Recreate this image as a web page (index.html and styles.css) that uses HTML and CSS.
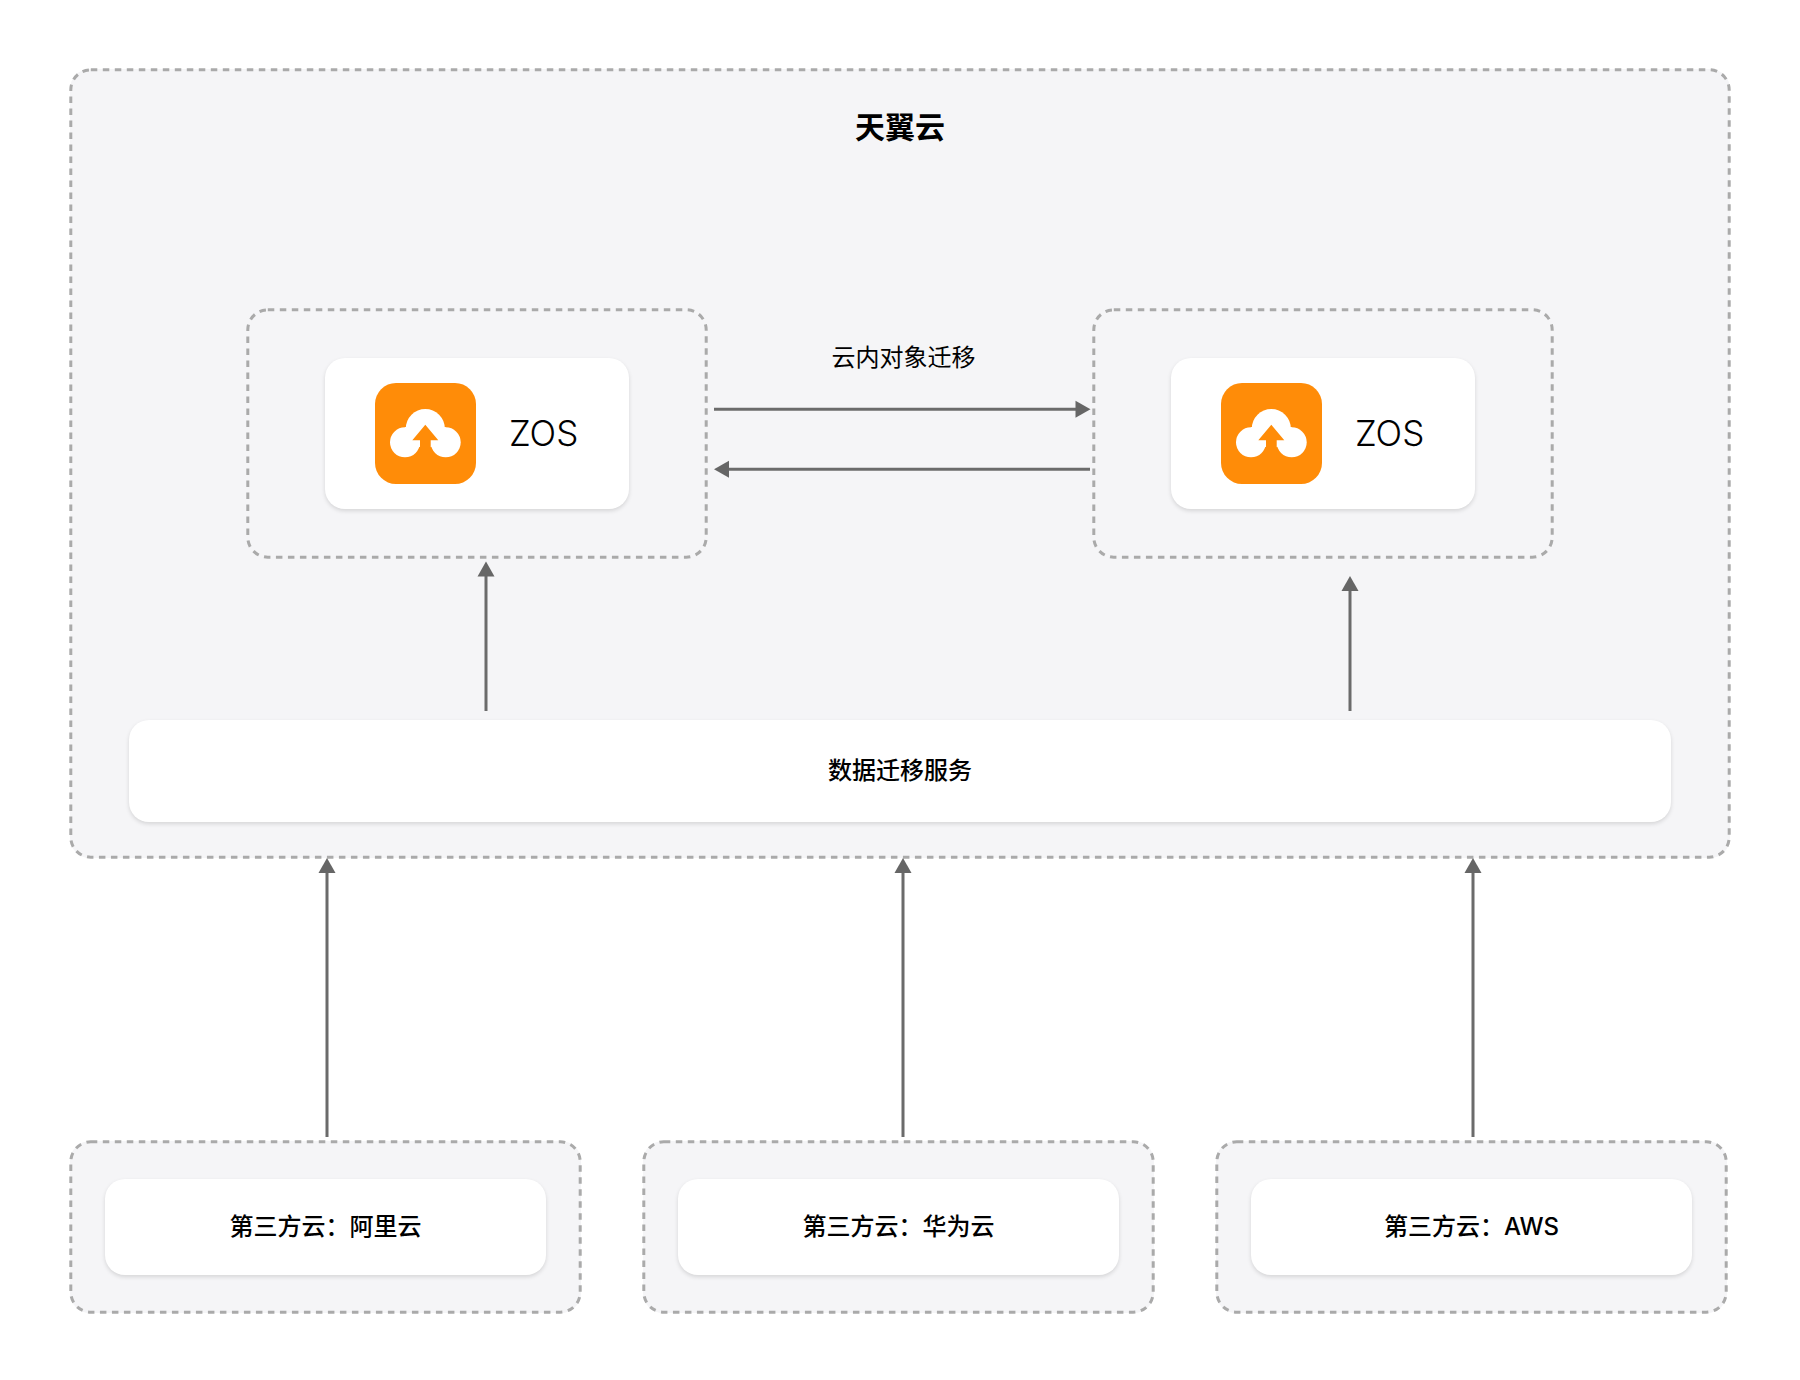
FILE: index.html
```html
<!DOCTYPE html>
<html lang="zh-CN">
<head>
<meta charset="utf-8">
<title>天翼云数据迁移</title>
<link rel="stylesheet" href="styles.css">
</head>
<body>
<main class="page">
  <section class="cloud dashed">
    <svg class="dash" aria-hidden="true"><rect class="dash-r20"/></svg>
    <h1 class="title">天翼云</h1>
    <div class="zones">
      <div class="zone dashed">
        <svg class="dash" aria-hidden="true"><rect class="dash-r20"/></svg>
        <div class="card zos">
          <svg class="zos-icon" viewBox="0 0 101 101" aria-hidden="true">
            <rect class="i-bg" width="101" height="101" rx="21"/>
            <circle class="i-w" cx="30" cy="59.3" r="15"/>
            <circle class="i-w" cx="70.7" cy="59.3" r="15"/>
            <circle class="i-w" cx="50.3" cy="45.500" r="19.5"/>
            <rect class="i-w" x="30" y="44" width="40.7" height="16"/>
            <path class="i-bg" d="M50.3 41.7 63.3 57.3H55.7V76H45V57.3H37.3Z"/>
          </svg>
          <span class="zos-name">ZOS</span>
        </div>
      </div>
      <div class="link"><span class="link-label">云内对象迁移</span></div>
      <div class="zone dashed">
        <svg class="dash" aria-hidden="true"><rect class="dash-r20"/></svg>
        <div class="card zos">
          <svg class="zos-icon" viewBox="0 0 101 101" aria-hidden="true">
            <rect class="i-bg" width="101" height="101" rx="21"/>
            <circle class="i-w" cx="30" cy="59.3" r="15"/>
            <circle class="i-w" cx="70.7" cy="59.3" r="15"/>
            <circle class="i-w" cx="50.3" cy="45.500" r="19.5"/>
            <rect class="i-w" x="30" y="44" width="40.7" height="16"/>
            <path class="i-bg" d="M50.3 41.7 63.3 57.3H55.7V76H45V57.3H37.3Z"/>
          </svg>
          <span class="zos-name">ZOS</span>
        </div>
      </div>
    </div>
    <div class="card service">数据迁移服务</div>
  </section>
  <section class="sources">
    <div class="source dashed">
      <svg class="dash" aria-hidden="true"><rect class="dash-r20"/></svg>
      <div class="card source-card">第三方云：阿里云</div>
    </div>
    <div class="source dashed">
      <svg class="dash" aria-hidden="true"><rect class="dash-r20"/></svg>
      <div class="card source-card">第三方云：华为云</div>
    </div>
    <div class="source dashed">
      <svg class="dash" aria-hidden="true"><rect class="dash-r20"/></svg>
      <div class="card source-card">第三方云：AWS</div>
    </div>
  </section>
  <svg class="arrows" viewBox="0 0 1800 1380" aria-hidden="true">
    <path class="shaft" d="M714 409.3H1077"/>
    <path class="head" d="M1090.5 409.3 1075.5 400.8V417.8Z"/>
    <path class="shaft" d="M1090 469.3H727"/>
    <path class="head" d="M714 469.3 729 460.8V477.8Z"/>
    <path class="shaft" d="M486 711V575"/>
    <path class="head" d="M486 561.5 477.5 576.5H494.5Z"/>
    <path class="shaft" d="M1350 711V589"/>
    <path class="head" d="M1350 576 1341.500 591H1358.500Z"/>
    <path class="shaft" d="M327 1137V871"/>
    <path class="head" d="M327 858 318.500 873H335.500Z"/>
    <path class="shaft" d="M903 1137V871"/>
    <path class="head" d="M903 858 894.500 873H911.500Z"/>
    <path class="shaft" d="M1473 1137V871"/>
    <path class="head" d="M1473 858 1464.500 873H1481.500Z"/>
  </svg>
</main>
</body>
</html>
```
FILE: styles.css
```css
* { box-sizing: border-box; }
html, body { margin: 0; background: #fff; }
body {
  font-family: "Inter", "Noto Sans CJK SC", sans-serif;
  color: #000;
}
.page {
  position: relative;
  width: 1800px;
  height: 1380px;
  padding: 69px 70px 0;
}
.dashed { position: relative; }
.dash {
  position: absolute;
  inset: 0;
  width: 100%;
  height: 100%;
  overflow: visible;
  pointer-events: none;
}
.dash-r20 {
  x: 0.8px;
  y: 0.8px;
  width: calc(100% - 1.6px);
  height: calc(100% - 1.6px);
  rx: 20px;
  fill: none;
  stroke: #aaaaaa;
  stroke-width: 3px;
  stroke-dasharray: 6.5 5.5;
}
.cloud {
  width: 1660px;
  height: 789px;
  padding: 38px 59px 0;
  background: #f5f5f7;
  border-radius: 20px;
}
.title {
  margin: 0;
  height: 40px;
  font-size: 30px;
  line-height: 41px;
  font-weight: 700;
  text-align: center;
}
.zones {
  display: flex;
  margin: 162px 0 0 118px;
}
.zone {
  flex: none;
  width: 460px;
  height: 249px;
  padding: 49px 78px 0;
}
.card {
  background: #fff;
  border-radius: 20px;
  box-shadow: 0 2px 4px rgba(0, 0, 0, .13);
}
.zos {
  display: flex;
  align-items: center;
  gap: 33px;
  width: 304px;
  height: 151px;
  padding-left: 50px;
}
.zos-icon { width: 101px; height: 101px; flex: none; }
.i-bg { fill: #ff8c08; }
.i-w { fill: #fff; }
.zos-name {
  font-size: 35px;
  line-height: 40px;
  font-weight: 300;
  padding-bottom: 2px;
}
.link {
  flex: none;
  width: 386px;
  padding-top: 32px;
  text-align: center;
}
.link-label {
  font-size: 24px;
  line-height: 34px;
  margin-left: 7px;
}
.service {
  display: flex;
  align-items: center;
  justify-content: center;
  width: 1542px;
  height: 102px;
  margin-top: 162px;
  padding-bottom: 6px;
  font-size: 24px;
  font-weight: 500;
}
.sources {
  display: flex;
  gap: 62px;
  margin-top: 283px;
}
.source {
  flex: none;
  width: 511px;
  height: 172px;
  padding: 38px 35px 0;
  background: #f5f5f7;
  border-radius: 20px;
}
.source-card {
  display: flex;
  align-items: center;
  justify-content: center;
  width: 441px;
  height: 96px;
  padding-bottom: 5px;
  font-size: 24px;
  font-weight: 500;
}
.arrows {
  position: absolute;
  inset: 0;
  width: 1800px;
  height: 1380px;
  pointer-events: none;
}
.shaft { fill: none; stroke: #6b6b6b; stroke-width: 3px; }
.head { fill: #666; }
```
